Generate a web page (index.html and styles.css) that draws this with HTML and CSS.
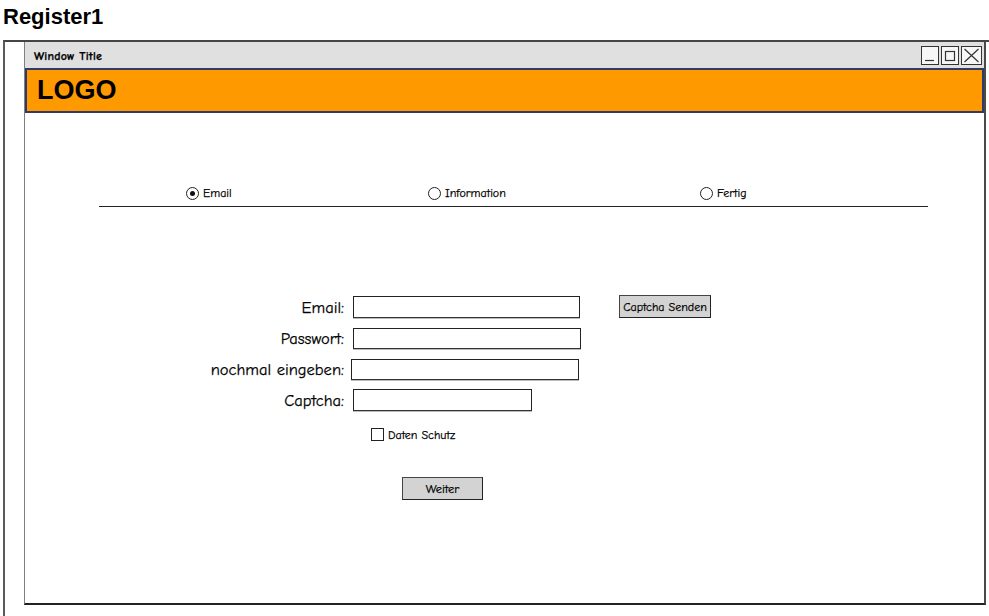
FILE: index.html
```html
<!DOCTYPE html>
<html lang="de">
<head>
<meta charset="utf-8">
<title>Register1</title>
<link rel="stylesheet" href="styles.css">
</head>
<body>
<h1 class="page-title">Register1</h1>
<div class="frame">
  <div class="window">
    <div class="titlebar">
      <span class="title-text">Window Title</span>
      <div class="controls">
        <span class="ctl"><svg width="16" height="17" viewBox="0 0 16 17"><line x1="3" y1="13.5" x2="12" y2="13.5" stroke="#333" stroke-width="1.2"/></svg></span>
        <span class="ctl"><svg width="16" height="17" viewBox="0 0 16 17"><rect x="3.5" y="4.5" width="9" height="9" fill="none" stroke="#333" stroke-width="1.2"/></svg></span>
        <span class="ctl ctl-wide"><svg width="19" height="17" viewBox="0 0 19 17"><path d="M2.5 2 L16.5 15 M16.5 2 L2.5 15" stroke="#333" stroke-width="1.2"/></svg></span>
      </div>
    </div>
    <div class="logo-bar">LOGO</div>
    <div class="content">
      <div class="stepper">
        <div class="step step-1"><span class="radio checked"></span><span class="step-label">Email</span></div>
        <div class="step step-2"><span class="radio"></span><span class="step-label">Information</span></div>
        <div class="step step-3"><span class="radio"></span><span class="step-label">Fertig</span></div>
      </div>
      <div class="form">
        <label class="lbl">Email:</label>
        <div class="field f-email"></div>
        <div class="side"><span class="btn btn-captcha">Captcha Senden</span></div>
        <label class="lbl">Passwort:</label>
        <div class="field f-pass"></div>
        <div class="side"></div>
        <label class="lbl">nochmal eingeben:</label>
        <div class="field f-again"></div>
        <div class="side"></div>
        <label class="lbl">Captcha:</label>
        <div class="field f-captcha"></div>
        <div class="side"></div>
      </div>
      <div class="check-row"><span class="checkbox"></span><span class="check-label">Daten Schutz</span></div>
      <div class="submit-row"><span class="btn btn-weiter">Weiter</span></div>
    </div>
  </div>
</div>
</body>
</html>
```

FILE: styles.css
```css
html, body {
  margin: 0;
  padding: 0;
  background: #ffffff;
  overflow: hidden;
}
body {
  width: 989px;
  height: 616px;
  font-family: "Comic Sans MS", "Comic Neue", "Open Sans", sans-serif;
  color: #000;
  -webkit-text-stroke: 0.25px #000;
}
.page-title {
  margin: 0;
  height: 40px;
  box-sizing: border-box;
  padding: 4px 0 0 3px;
  font-family: "Liberation Sans", Arial, sans-serif;
  font-weight: bold;
  font-size: 22px;
  line-height: 26px;
  -webkit-text-stroke: 0;
}
.frame {
  margin-left: 3px;
  height: 576px;
  box-sizing: border-box;
  border-top: 2px solid #454545;
  border-left: 2px solid #5a5a5a;
  padding-left: 19px;
}
.window {
  width: 962px;
  height: 563px;
  box-sizing: border-box;
  border-left: 1px solid #808080;
  border-right: 2px solid #4a4a4a;
  border-bottom: 2px solid #222;
  display: flex;
  flex-direction: column;
}
.titlebar {
  height: 26px;
  background: #e0e0e0;
  display: flex;
  align-items: center;
  justify-content: space-between;
  padding-left: 9px;
  padding-right: 2px;
}
.title-text {
  font-size: 12px;
  font-weight: bold;
  letter-spacing: 0.2px;
  padding-top: 1px;
}
.controls {
  display: flex;
  gap: 2px;
}
.ctl {
  display: flex;
  width: 16px;
  height: 17px;
  border: 1px solid #333;
  background: #f6f6f6;
}
.ctl-wide {
  width: 19px;
}
.logo-bar {
  height: 45px;
  box-sizing: border-box;
  background: #ff9900;
  border: 2px solid #2f3b6b;
  padding-left: 10px;
  font-family: "Liberation Sans", Arial, sans-serif;
  font-weight: bold;
  font-size: 27px;
  line-height: 41px;
  -webkit-text-stroke: 0;
}
.content {
  flex: 1;
  display: flex;
  flex-direction: column;
}
.stepper {
  margin: 73px 0 0 74px;
  width: 829px;
  display: flex;
  padding-left: 87px;
  box-sizing: border-box;
  height: 21px;
  border-bottom: 1px solid #222;
  align-items: flex-start;
}
.step {
  display: flex;
  align-items: center;
  height: 14px;
  gap: 4px;
  font-size: 12px;
}
.step-1 { width: 242px; }
.step-2 { width: 272px; }
.radio {
  width: 11px;
  height: 11px;
  border: 1px solid #222;
  border-radius: 50%;
  background: #fff;
  position: relative;
  flex: none;
}
.radio.checked::after {
  content: "";
  position: absolute;
  left: 3px;
  top: 3px;
  width: 5px;
  height: 5px;
  border-radius: 50%;
  background: #111;
}
.form {
  margin-top: 89px;
  display: grid;
  grid-template-columns: 319px 228px auto;
  grid-auto-rows: 22px;
  column-gap: 9px;
  row-gap: 9px;
  align-items: center;
}
.lbl {
  text-align: right;
  font-size: 16.5px;
  line-height: 22px;
  padding-top: 1px;
}
.field {
  height: 22px;
  box-sizing: border-box;
  border: 1px solid #222;
  border-bottom-color: #333;
  box-shadow: 0 1px 0 #bbb;
  background: #fff;
}
.f-email { width: 227px; }
.f-pass { width: 228px; height: 21px; }
.f-again { width: 228px; height: 21px; margin-left: -2px; }
.f-captcha { width: 179px; }
.side {
  padding-left: 29px;
}
.btn {
  display: flex;
  align-items: center;
  justify-content: center;
  box-sizing: border-box;
  background: #d3d3d3;
  border: 1px solid #444;
  border-right-color: #222;
  border-bottom-color: #222;
  font-size: 12px;
}
.btn-captcha {
  width: 92px;
  height: 23px;
  margin-top: -1px;
}
.btn-weiter {
  width: 81px;
  height: 23px;
  font-size: 12.5px;
}
.check-row {
  margin: 17px 0 0 346px;
  display: flex;
  align-items: center;
  gap: 4px;
  font-size: 12px;
  height: 13px;
}
.checkbox {
  width: 11px;
  height: 11px;
  border: 1px solid #222;
  background: #fff;
}
.submit-row {
  margin: 36px 0 0 377px;
  display: flex;
}
```
